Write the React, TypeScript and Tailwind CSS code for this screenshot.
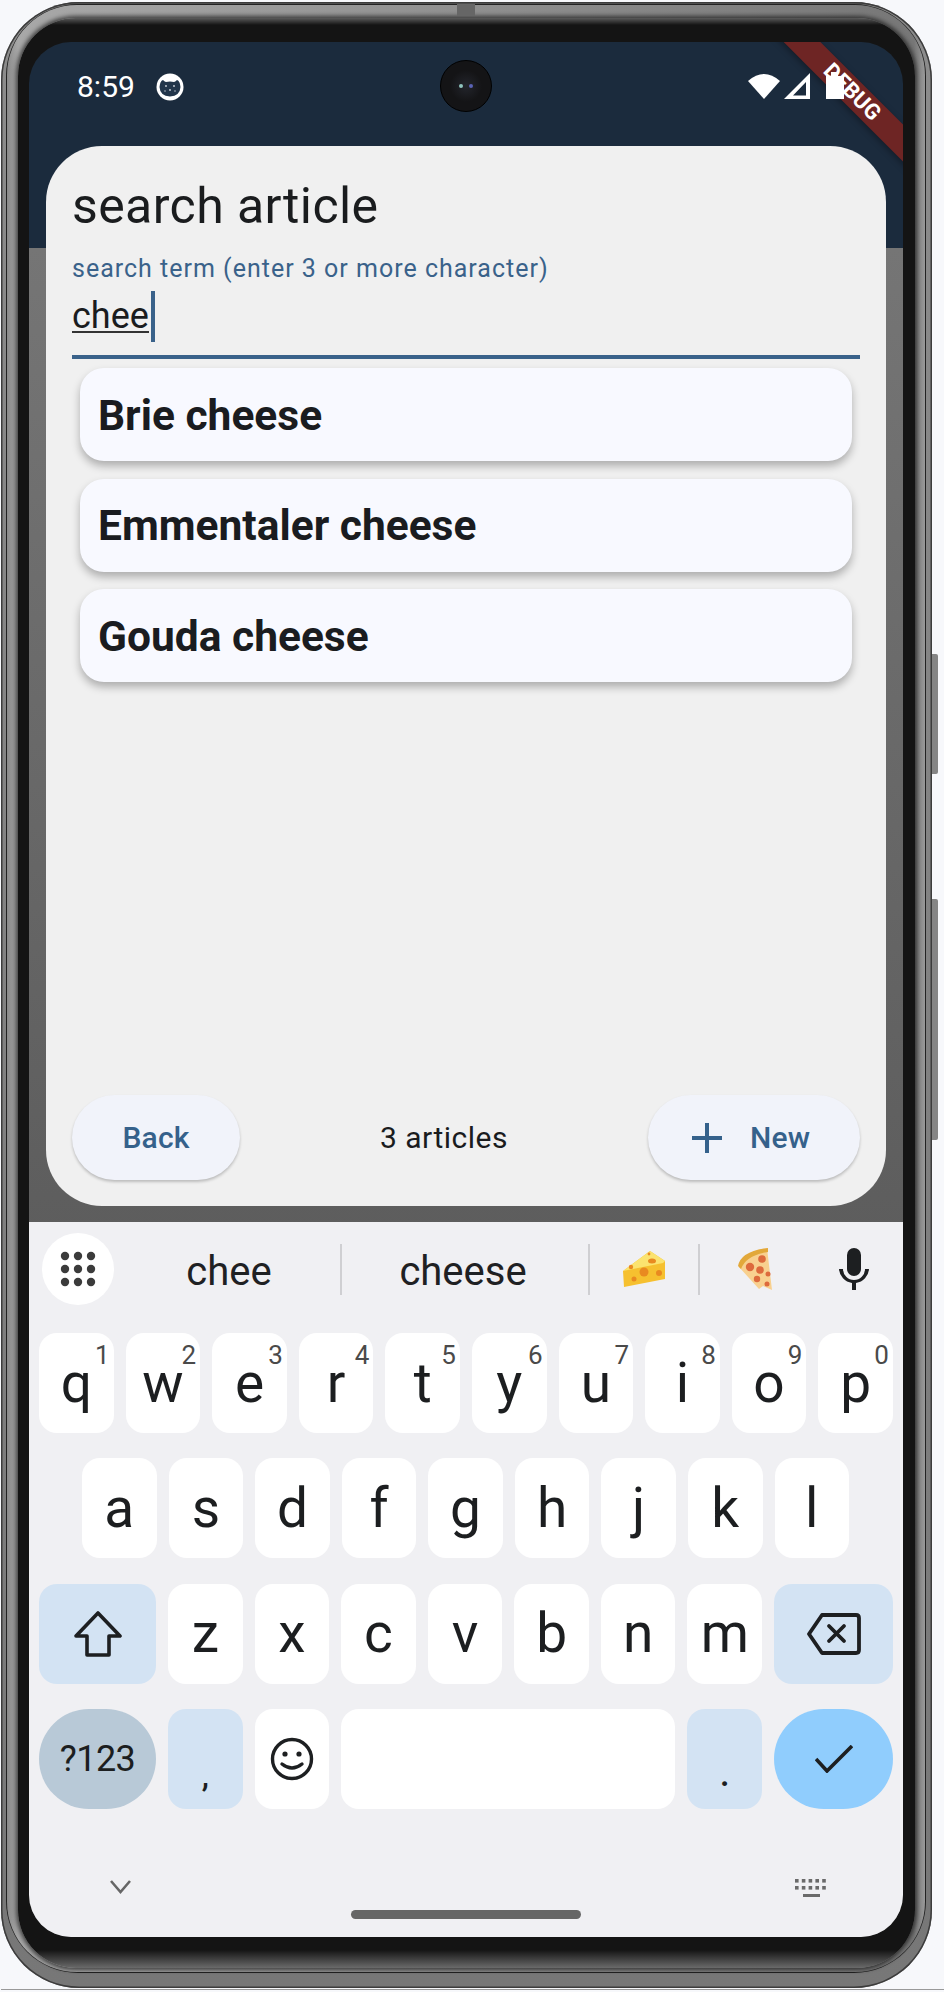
import React from 'react';

const numbers = ['1', '2', '3', '4', '5', '6', '7', '8', '9', '0'];

const Key = ({ label, hint, className = '', children }: { label?: string; hint?: string; className?: string; children?: React.ReactNode }) => (
  <div className={`relative flex h-[100px] items-center justify-center rounded-[18px] bg-white text-[55px] leading-none text-[#1c1e20] ${className}`}>
    {label}
    {children}
    {hint && <span className="absolute right-[4px] top-[7px] text-[26px] leading-[30px] text-[#4a4a4a]">{hint}</span>}
  </div>
);

const GridIcon = () => (
  <svg width="36" height="36" viewBox="0 0 36 36" fill="#3b3b3b">
    {[5, 18, 31].map((y) => [5, 18, 31].map((x) => <circle key={`${x}-${y}`} cx={x} cy={y} r="4.2" />))}
  </svg>
);

const CheeseIcon = () => (
  <svg width="44" height="38" viewBox="0 0 44 38">
    <path d="M1 21 L28 1 L43 11 L43 29 L2 37 Z" fill="#f6c02f" />
    <path d="M1 21 L28 1 L43 11 L41 13 Z" fill="#fbe36f" />
    <circle cx="22" cy="22" r="4.5" fill="#e98a20" />
    <circle cx="37" cy="23" r="3" fill="#e98a20" />
    <circle cx="12" cy="29" r="2.5" fill="#e98a20" />
    <circle cx="9" cy="17" r="2.2" fill="#e98a20" />
    <ellipse cx="30" cy="11" rx="4" ry="2.5" fill="#e98a20" />
    <circle cx="27" cy="4" r="1.4" fill="#e98a20" />
  </svg>
);

const PizzaIcon = () => (
  <svg width="36" height="44" viewBox="0 0 36 44">
    <path d="M2 20 Q4 6 30 1 L35 43 L26 39 L22 42 Z" fill="#f8d08f" />
    <path d="M1 19 Q4 4 31 1 L31 5 Q9 8 4 22 Z" fill="#e2a83a" />
    <circle cx="25" cy="12" r="3.8" fill="#dd6a3c" />
    <circle cx="13" cy="20" r="4.2" fill="#dd6a3c" />
    <circle cx="23" cy="23" r="3.8" fill="#dd6a3c" />
    <circle cx="20" cy="32" r="3.2" fill="#dd6a3c" />
    <circle cx="31" cy="27" r="2.5" fill="#dd6a3c" />
    <circle cx="30" cy="37" r="2.5" fill="#dd6a3c" />
  </svg>
);

const App = () => {
  return (
    <div className="h-[1992px] w-[944px] overflow-hidden bg-[#f7f8fb] pl-[1px] pt-[2px] [font-family:Roboto,sans-serif]">
      {/* phone body */}
      <div className="relative h-[1986px] w-[931px] rounded-[78px] bg-[linear-gradient(to_bottom,#4a4a4a_0px,#8c8c8c_4px,#777_100%)] pb-[15px] pl-[5px] pr-[6px] pt-[2px] shadow-[inset_0_0_0_1.5px_#3c3c3c]">
        <div className="absolute right-[-6px] top-[652px] h-[120px] w-[6px] rounded-r-[2px] bg-[#858585]" />
        <div className="absolute right-[-6px] top-[897px] h-[241px] w-[6px] rounded-r-[2px] bg-[#858585]" />
        <div className="absolute left-[456px] top-[2px] h-[12px] w-[18px] bg-[#666]" />
        <div className="h-full rounded-[72px] bg-[#222] p-[1px]">
          <div className="h-full rounded-[70px] bg-[linear-gradient(to_right,#8a8a8a,#a8a8a8_1.2%,#777_98.8%,#999)] pb-[4px] pl-[11px] pr-[10px] pt-[13px]">
            <div className="h-full rounded-[58px] bg-[linear-gradient(to_bottom,#5a5a5a_0px,#141414_7px,#141414_calc(100%-18px),#6a6a6a_100%)] pb-[31px] pl-[11px] pr-[12px] pt-[24px] shadow-[0_0_4px_2px_rgba(20,20,20,0.7)]">
              {/* screen */}
              <div className="relative flex h-[1895px] w-[874px] flex-col overflow-hidden rounded-[42px] bg-[linear-gradient(to_bottom,#1b2b3d_206px,#757575_206px,#4c4c4c_100%)]">
                {/* debug banner */}
                <div className="absolute left-[723px] top-[37px] z-10 flex h-[26px] w-[200px] rotate-45 items-center justify-center bg-[#6e2524] shadow-[0_2px_6px_rgba(0,0,0,0.35)]" />

                {/* status bar */}
                <div className="relative z-20 flex h-[104px] shrink-0 items-start pl-[48px] pr-[59px] pt-[29px]">
                  <span className="text-[30px] leading-[32px] text-white">8:59</span>
                  <svg className="ml-[21px] mt-[2px]" width="28" height="28" viewBox="0 0 28 28">
                    <circle cx="14" cy="14" r="13.5" fill="#fff" />
                    <path d="M3.5 14 Q4 8 7 7 Q9 9 10 9 Q14 8 18 9 Q19 9 21 7 Q24 8 24.5 14 Q24 23 14 23.5 Q4 23 3.5 14 Z" fill="#22354a" />
                    <circle cx="10" cy="13" r="0.9" fill="#cfd6dd" />
                    <circle cx="18" cy="13" r="0.9" fill="#cfd6dd" />
                    <circle cx="14" cy="17" r="0.9" fill="#cfd6dd" />
                    <circle cx="9" cy="18" r="0.7" fill="#cfd6dd" />
                    <circle cx="19" cy="18" r="0.7" fill="#cfd6dd" />
                  </svg>
                  <div className="ml-auto flex items-start">
                    <svg width="32" height="28" viewBox="0 0 32 28" className="mt-[1px]">
                      <path d="M0 9 Q16 -5 32 9 L16 27 Z" fill="#fff" />
                    </svg>
                    <svg width="28" height="28" viewBox="0 0 28 28" className="ml-[3px] mt-[1px]">
                      <path d="M27 1 V27 H1 Z M23 10 L10 23.5 H23 Z" fill="#fff" fillRule="evenodd" />
                    </svg>
                  </div>
                  <svg width="18" height="28" viewBox="0 0 18 28" className="ml-[15px] mt-[1px]">
                    <path d="M5 0 H12 V4 H18 V27 H0 V4 H5 Z" fill="#fff" />
                  </svg>
                </div>

                {/* camera */}
                <div className="absolute left-[411px] top-[18px] z-20 flex h-[52px] w-[52px] items-center justify-center gap-[6px] rounded-full border border-black bg-[radial-gradient(circle,#23252c_0%,#141416_45%)]">
                  <span className="h-[4px] w-[4px] rounded-full bg-[#8fc4bd]" />
                  <span className="h-[4px] w-[4px] rounded-full bg-[#5a63b5]" />
                </div>

                <span className="absolute left-[788px] top-[37px] z-30 rotate-45 text-[22px] font-bold leading-[26px] text-white">DEBUG</span>

                {/* card */}
                <div className="mx-[17px] flex h-[1060px] shrink-0 flex-col rounded-[56px] bg-[#f0f0f0] px-[26px] pb-[26px] pt-[30px]">
                  <h1 className="text-[50px] font-normal leading-[60px] tracking-[0.4px] text-[#1a1c1e]">search article</h1>
                  <div className="mt-[18px] text-[25px] leading-[30px] tracking-[1px] text-[#3a628a]">search term (enter 3 or more character)</div>
                  <div className="mt-[3px] flex h-[55px] items-start">
                    <span className="mt-[14px] border-b-2 border-[#333] text-[36px] leading-[30px] text-[#1a1c1e]">chee</span>
                    <span className="ml-[2px] mt-[4px] h-[51px] w-[4px] bg-[#3a628a]" />
                  </div>
                  <div className="mt-[13px] h-[4px] bg-[#3a628a]" />

                  <div className="mx-[8px] mt-[9px] flex flex-col gap-[17.5px]">
                    {['Brie cheese', 'Emmentaler cheese', 'Gouda cheese'].map((name) => (
                      <div key={name} className="flex h-[93px] items-center rounded-[24px] bg-[#f8f9ff] px-[18px] pt-[2px] text-[42.5px] font-bold text-[#1a1c20] shadow-[0_5px_8px_rgba(0,0,0,0.28)]">
                        {name}
                      </div>
                    ))}
                  </div>

                  <div className="mt-auto flex items-center justify-between">
                    <div className="flex h-[85px] w-[168px] items-center justify-center rounded-full bg-[#f1f3fa] text-[30px] font-medium tracking-[0.2px] text-[#35618b] shadow-[0_2px_3px_rgba(0,0,0,0.22)]">Back</div>
                    <span className="text-[30px] tracking-[0.5px] text-[#1a1c1e]">3 articles</span>
                    <div className="flex h-[85px] w-[212px] items-center rounded-full bg-[#f1f3fa] pl-[44px] text-[30px] font-medium tracking-[0.2px] text-[#35618b] shadow-[0_2px_3px_rgba(0,0,0,0.22)]">
                      <svg width="30" height="30" viewBox="0 0 30 30" fill="#35618b"><path d="M13 0 H17 V13 H30 V17 H17 V30 H13 V17 H0 V13 H13 Z" /></svg>
                      <span className="ml-[28px]">New</span>
                    </div>
                  </div>
                </div>

                {/* keyboard */}
                <div className="mt-[16px] flex flex-1 flex-col bg-[#f0f0f3]">
                  <div className="mt-[11px] flex h-[72px] items-center pl-[13px]">
                    <div className="flex h-[72px] w-[72px] shrink-0 items-center justify-center rounded-full bg-white"><GridIcon /></div>
                    <div className="w-[226px] pl-[4px] pt-[6px] text-center text-[40px] text-[#1f2123]">chee</div>
                    <div className="h-[51px] w-[2px] bg-[#cfcfd2]" />
                    <div className="w-[246px] pr-[4px] pt-[6px] text-center text-[40px] text-[#1f2123]">cheese</div>
                    <div className="h-[51px] w-[2px] bg-[#cfcfd2]" />
                    <div className="flex w-[108px] justify-center"><CheeseIcon /></div>
                    <div className="h-[51px] w-[2px] bg-[#cfcfd2]" />
                    <div className="flex w-[110px] justify-center"><PizzaIcon /></div>
                    <svg className="ml-[29px]" width="30" height="42" viewBox="0 0 30 42" fill="#1d1f21">
                      <rect x="8" y="0" width="14" height="28" rx="7" />
                      <path d="M0 21 H4 A11 11 0 0 0 26 21 H30 A15 15 0 0 1 17 35 V42 H13 V35 A15 15 0 0 1 0 21 Z" />
                    </svg>
                  </div>

                  <div className="mt-[28px] flex flex-col gap-[25.3px] pl-[10px] pr-[10px]">
                    <div className="flex gap-[12px]">
                      {'qwertyuiop'.split('').map((k, i) => <Key key={k} label={k} hint={numbers[i]} className="flex-1" />)}
                    </div>
                    <div className="flex gap-[12px] pl-[43px] pr-[44px]">
                      {'asdfghjkl'.split('').map((k) => <Key key={k} label={k} className="flex-1" />)}
                    </div>
                    <div className="flex gap-[12px]">
                      <Key className="w-[117px] shrink-0 !bg-[#d3e3f3]">
                        <svg width="48" height="46" viewBox="0 0 48 46" fill="none" stroke="#1d1f21" strokeWidth="3.6" strokeLinejoin="round">
                          <path d="M24 2 L46 25 H35 V44 H13 V25 H2 Z" />
                        </svg>
                      </Key>
                      {'zxcvbnm'.split('').map((k) => <Key key={k} label={k} className="flex-1" />)}
                      <Key className="w-[119px] shrink-0 !bg-[#d3e3f3]">
                        <svg width="54" height="42" viewBox="0 0 54 42" fill="none" stroke="#1d1f21" strokeWidth="3.8" strokeLinejoin="round" strokeLinecap="round">
                          <path d="M15 2 H49 Q52 2 52 5 V37 Q52 40 49 40 H15 L2 21 Z" />
                          <path d="M22 13 L37 28 M37 13 L22 28" />
                        </svg>
                      </Key>
                    </div>
                    <div className="flex gap-[12px]">
                      <Key label="?123" className="w-[117px] shrink-0 !rounded-[50px] !bg-[#b8c9d7] !text-[36px] tracking-[-0.5px]" />
                      <Key label="," className="w-[74.6px] shrink-0 !bg-[#d3e3f3] !text-[32px] pt-[34px] font-medium" />
                      <Key className="w-[74.6px] shrink-0">
                        <svg width="44" height="44" viewBox="0 0 44 44" fill="none" stroke="#1d1f21" strokeWidth="3.4" strokeLinecap="round">
                          <circle cx="22" cy="22" r="19.5" />
                          <path d="M12 27 Q22 35 32 27" />
                          <circle cx="15" cy="17" r="2.6" fill="#1d1f21" stroke="none" />
                          <circle cx="29" cy="17" r="2.6" fill="#1d1f21" stroke="none" />
                        </svg>
                      </Key>
                      <Key className="flex-1" />
                      <Key label="." className="w-[74.6px] shrink-0 !bg-[#d3e3f3] !text-[36px] pt-[30px] font-medium" />
                      <Key className="w-[119px] shrink-0 !rounded-[50px] !bg-[#90cdfd]">
                        <svg width="38" height="28" viewBox="0 0 38 28" fill="none" stroke="#1d1f21" strokeWidth="3.6">
                          <path d="M1 14 L12 26 L37 1" />
                        </svg>
                      </Key>
                    </div>
                  </div>

                  <div className="mt-[70px] flex items-start justify-between pl-[81px] pr-[75px]">
                    <svg width="21" height="14" viewBox="0 0 21 14" fill="none" stroke="#666" strokeWidth="2.6" className="mt-[1px]"><path d="M1 1 L10.5 12 L20 1" /></svg>
                    <svg width="33" height="19" viewBox="0 0 33 19" fill="#6a6a6a">
                      {[0, 6.8, 13.6, 20.4, 27.2].map((x) => <rect key={x} x={x} y="0" width="3.6" height="3.6" />)}
                      {[0, 6.8, 13.6, 20.4, 27.2].map((x) => <rect key={x} x={x} y="7" width="3.6" height="3.6" />)}
                      <rect x="8" y="15" width="17" height="3" />
                    </svg>
                  </div>
                  <div className="mx-auto mt-[12px] h-[9px] w-[230px] rounded-full bg-[#666]" />
                </div>
              </div>
            </div>
          </div>
        </div>
      </div>
      <div className="mt-[1px] h-[1px] w-full bg-[#999]" />
    </div>
  );
};

export default App;
